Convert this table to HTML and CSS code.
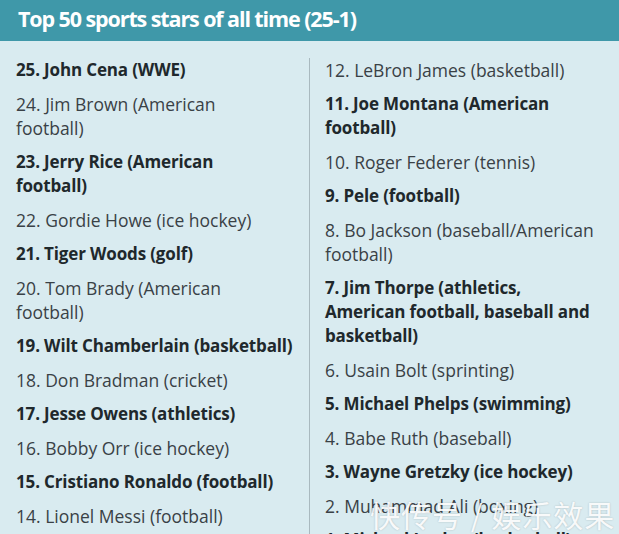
FILE: index.html
```html
<!DOCTYPE html>
<html>
<head>
<meta charset="utf-8">
<link rel="stylesheet" href="styles.css">
</head>
<body>
<div class="card">
  <header class="title-bar"><h1 class="title">Top 50 sports stars of all time (25-1)</h1></header>
  <div class="columns">
    <ul class="col col-left">
      <li class="item bold">25. John Cena (WWE)</li>
      <li class="item">24. Jim Brown (American<br>football)</li>
      <li class="item bold">23. Jerry Rice (American<br>football)</li>
      <li class="item">22. Gordie Howe (ice hockey)</li>
      <li class="item bold">21. Tiger Woods (golf)</li>
      <li class="item">20. Tom Brady (American<br>football)</li>
      <li class="item bold">19. Wilt Chamberlain (basketball)</li>
      <li class="item">18. Don Bradman (cricket)</li>
      <li class="item bold">17. Jesse Owens (athletics)</li>
      <li class="item">16. Bobby Orr (ice hockey)</li>
      <li class="item bold">15. Cristiano Ronaldo (football)</li>
      <li class="item">14. Lionel Messi (football)</li>
    </ul>
    <ul class="col col-right">
      <li class="item">12. LeBron James (basketball)</li>
      <li class="item bold">11. Joe Montana (American<br>football)</li>
      <li class="item">10. Roger Federer (tennis)</li>
      <li class="item bold">9. Pele (football)</li>
      <li class="item">8. Bo Jackson (baseball/American<br>football)</li>
      <li class="item bold">7. Jim Thorpe (athletics,<br>American football, baseball and<br>basketball)</li>
      <li class="item">6. Usain Bolt (sprinting)</li>
      <li class="item bold">5. Michael Phelps (swimming)</li>
      <li class="item">4. Babe Ruth (baseball)</li>
      <li class="item bold">3. Wayne Gretzky (ice hockey)</li>
      <li class="item">2. Muhammad Ali (boxing)</li>
      <li class="item bold">1. Michael Jordan (basketball)</li>
    </ul>
  </div>
  <div class="watermark">快传号 / 娱乐效果</div>
</div>
</body>
</html>
```

FILE: styles.css
```css
html, body {
  margin: 0;
  padding: 0;
  background: #d9ebf0;
  overflow: hidden;
}
.card {
  position: relative;
  width: 619px;
  height: 534px;
  overflow: hidden;
  background: #d9ebf0;
  font-family: "Open Sans", "Noto Sans", sans-serif;
}
.title-bar {
  background: #3f98a9;
  height: 41px;
  box-sizing: border-box;
  padding: 0 0 3px 18px;
  display: flex;
  align-items: center;
}
.title {
  margin: 0;
  color: #ffffff;
  font-size: 21.5px;
  font-weight: 700;
  letter-spacing: -1.1px;
  line-height: 1;
}
.columns {
  display: grid;
  grid-template-columns: 309px 1fr;
  margin-top: 17px;
}
.col {
  list-style: none;
  margin: 0;
  padding: 0;
  display: flex;
  flex-direction: column;
  gap: 10px;
  white-space: nowrap;
}
.col-left {
  padding-left: 16px;
  padding-right: 4px;
}
.col-right {
  border-left: 1px solid #a9b9bf;
  padding-left: 15px;
  padding-right: 4px;
}
.item {
  font-size: 17.5px;
  line-height: 24px;
  color: #394146;
  font-weight: 400;
}
.item.bold {
  font-size: 17px;
  font-weight: 700;
  letter-spacing: -0.15px;
  color: #20282c;
}
.watermark {
  position: absolute;
  left: 370px;
  top: 496px;
  font-family: "Noto Sans CJK SC", sans-serif;
  font-size: 30px;
  line-height: 36px;
  color: rgba(255, 255, 255, 0.92);
  letter-spacing: 1px;
  text-shadow: 0 0 2px rgba(0, 0, 0, 0.2);
}
```
